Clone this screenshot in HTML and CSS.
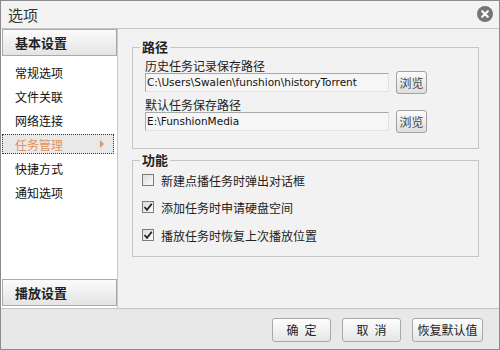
FILE: index.html
```html
<!DOCTYPE html>
<html lang="zh">
<head>
<meta charset="utf-8">
<title>选项</title>
<link rel="stylesheet" href="styles.css">
</head>
<body>
<div class="window">
  <div class="titlebar">
    <span class="title">选项</span>
    <span class="close"><svg width="16" height="16" viewBox="0 0 16 16"><circle cx="8" cy="8" r="8" fill="#767676"/><path d="M5.2 5.2 L10.8 10.8 M10.8 5.2 L5.2 10.8" stroke="#fff" stroke-width="2.2" stroke-linecap="round"/></svg></span>
  </div>
  <div class="main">
    <div class="sidebar">
      <div class="section-btn">基本设置</div>
      <ul class="menu">
        <li class="menu-item">常规选项</li>
        <li class="menu-item">文件关联</li>
        <li class="menu-item">网络连接</li>
        <li class="menu-item selected">任务管理<span class="arrow"></span></li>
        <li class="menu-item">快捷方式</li>
        <li class="menu-item">通知选项</li>
      </ul>
      <div class="spacer"></div>
      <div class="section-btn bottom">播放设置</div>
    </div>
    <div class="content">
      <fieldset class="group">
        <legend>路径</legend>
        <div class="label">历史任务记录保存路径</div>
        <div class="path-row">
          <div class="path-input">C:\Users\Swalen\funshion\historyTorrent</div>
          <div class="browse">浏览</div>
        </div>
        <div class="label second">默认任务保存路径</div>
        <div class="path-row">
          <div class="path-input">E:\FunshionMedia</div>
          <div class="browse">浏览</div>
        </div>
      </fieldset>
      <fieldset class="group group2">
        <legend>功能</legend>
        <div class="check-row"><span class="box"></span><span>新建点播任务时弹出对话框</span></div>
        <div class="check-row r2"><span class="box checked"><svg width="10" height="10" viewBox="0 0 10 10"><path d="M1.5 5 L4 7.8 L8.8 1.8" stroke="#222" stroke-width="1.8" fill="none"/></svg></span><span>添加任务时申请硬盘空间</span></div>
        <div class="check-row r3"><span class="box checked"><svg width="10" height="10" viewBox="0 0 10 10"><path d="M1.5 5 L4 7.8 L8.8 1.8" stroke="#222" stroke-width="1.8" fill="none"/></svg></span><span>播放任务时恢复上次播放位置</span></div>
      </fieldset>
    </div>
  </div>
  <div class="footer">
    <div class="btn spaced">确定</div>
    <div class="btn spaced">取消</div>
    <div class="btn wide">恢复默认值</div>
  </div>
</div>
</body>
</html>
```
FILE: styles.css
```css
* { box-sizing: border-box; }
html, body { margin: 0; padding: 0; }
body {
  width: 500px;
  height: 350px;
  overflow: hidden;
  font-family: "Noto Sans CJK SC", "Liberation Sans", sans-serif;
  font-size: 12px;
  color: #222;
  background: #f2f2f2;
}
.window {
  width: 500px;
  height: 350px;
  border: 1px solid #8c8c8c;
  display: flex;
  flex-direction: column;
  background: #f2f2f2;
}
.titlebar {
  height: 28px;
  border-bottom: 1px solid #c4c4c4;
  display: flex;
  align-items: center;
  justify-content: space-between;
  padding: 0 6px 0 7px;
  background: #f3f3f3;
}
.title {
  font-size: 15px;
  line-height: 16px;
  color: #333;
}
.close { display: flex; margin-top: -1px; }
.main {
  height: 280px;
  display: flex;
  border-bottom: 1px solid #c4c4c4;
}
.sidebar {
  width: 117px;
  background: #fff;
  border-right: 1px solid #c8c8c8;
  display: flex;
  flex-direction: column;
  padding: 0 0 2px 1px;
}
.section-btn {
  height: 27px;
  border: 1px solid #a9a9a9;
  background: linear-gradient(#fbfbfb, #e4e4e4);
  font-size: 13px;
  font-weight: bold;
  line-height: 25px;
  padding-left: 12px;
  color: #222;
}
.menu {
  list-style: none;
  margin: 6px 0 0 0;
  padding: 0;
  display: flex;
  flex-direction: column;
  gap: 4px;
}
.menu-item {
  height: 20px;
  line-height: 20px;
  padding-left: 12px;
  margin-right: 3px;
  border: 1px solid transparent;
  position: relative;
  color: #111;
}
.menu-item.selected {
  background: #e9e9e9;
  border: 1px dotted #333;
  color: #e3925a;
}
.arrow {
  position: absolute;
  right: 9px;
  top: 5px;
  width: 0;
  height: 0;
  border-left: 4px solid #d69a6c;
  border-top: 4px solid transparent;
  border-bottom: 4px solid transparent;
}
.spacer { flex: 1; }
.content {
  flex: 1;
  padding: 10px 20px 0 14px;
  background: #f2f2f2;
}
.group {
  margin: 0;
  border: 1px solid #c6c6c6;
  padding: 4px 10px 15px 12px;
}
.group legend {
  font-size: 13px;
  font-weight: bold;
  line-height: 16px;
  padding: 0 2px;
  margin-left: -5px;
  color: #222;
}
.label {
  line-height: 14px;
  height: 14px;
}
.label.second { margin-top: 4px; }
.path-row {
  display: flex;
  align-items: center;
  height: 23px;
  margin-top: -2px;
  gap: 7px;
}
.path-input {
  width: 244px;
  height: 19px;
  border: 1px solid;
  border-color: #a8a8a8 #e2e2e2 #e2e2e2 #a8a8a8;
  background: #f6f6f6;
  font-family: "DejaVu Sans", "Liberation Sans", sans-serif;
  font-size: 10.5px;
  line-height: 17px;
  padding-left: 1px;
  color: #111;
  white-space: nowrap;
  overflow: hidden;
}
.browse {
  width: 31px;
  height: 23px;
  border: 1px solid #a0a0a0;
  border-radius: 3px;
  background: linear-gradient(#fcfcfc, #dedede);
  text-align: center;
  line-height: 21px;
  color: #444;
}
.group2 {
  margin-top: 3px;
  padding: 2px 10px 11px 12px;
}
.check-row {
  display: flex;
  align-items: center;
  height: 20px;
  gap: 7px;
  margin-left: -3px;
}
.check-row.r2 { margin-top: 7px; }
.check-row.r3 { margin-top: 8px; }
.box {
  width: 12px;
  height: 12px;
  border: 1px solid #7c7c7c;
  background: linear-gradient(135deg, #dcdcdc, #fbfbfb);
  display: flex;
  align-items: center;
  justify-content: center;
}
.footer {
  flex: 1;
  background: #e8e8e8;
  display: flex;
  justify-content: flex-end;
  align-items: flex-start;
  padding: 9px 16px 0 0;
  gap: 11px;
}
.btn {
  width: 59px;
  height: 24px;
  border: 1px solid #a8a8a8;
  border-radius: 3px;
  background: linear-gradient(#fdfdfd, #e6e6e6);
  text-align: center;
  line-height: 22px;
  font-size: 12px;
  color: #222;
}
.btn.spaced {
  letter-spacing: 6px;
  padding-left: 6px;
}
.btn.wide { width: 71px; }
```
